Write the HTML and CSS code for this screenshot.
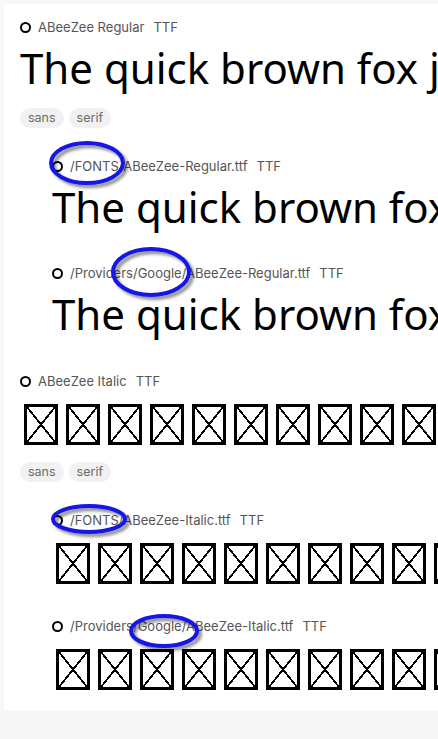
FILE: index.html
```html
<!DOCTYPE html>
<html>
<head>
<meta charset="utf-8">
<link rel="stylesheet" href="styles.css">
</head>
<body>
<div class="card">
  <div class="entry">
    <div class="head"><span class="dot"></span><span class="name">ABeeZee Regular</span><span class="fmt">TTF</span></div>
    <div class="sample">The quick brown fox jumps over the lazy dog</div>
    <div class="tags"><span class="tag">sans</span><span class="tag">serif</span></div>
    <div class="subs">
      <div class="sub">
        <div class="head"><span class="dot"></span><span class="name">/FONTS/ABeeZee-Regular.ttf</span><span class="fmt">TTF</span></div>
        <div class="sample">The quick brown fox jumps over the lazy dog</div>
      </div>
      <div class="sub">
        <div class="head"><span class="dot"></span><span class="name">/Providers/Google/ABeeZee-Regular.ttf</span><span class="fmt">TTF</span></div>
        <div class="sample">The quick brown fox jumps over the lazy dog</div>
      </div>
    </div>
  </div>
  <div class="entry">
    <div class="head"><span class="dot"></span><span class="name">ABeeZee Italic</span><span class="fmt">TTF</span></div>
    <div class="tofu-row"><i></i><i></i><i></i><i></i><i></i><i></i><i></i><i></i><i></i><i></i><i></i><i></i><i></i></div>
    <div class="tags after-tofu"><span class="tag">sans</span><span class="tag">serif</span></div>
    <div class="subs">
      <div class="sub">
        <div class="head"><span class="dot"></span><span class="name">/FONTS/ABeeZee-Italic.ttf</span><span class="fmt">TTF</span></div>
        <div class="tofu-row"><i></i><i></i><i></i><i></i><i></i><i></i><i></i><i></i><i></i><i></i><i></i><i></i></div>
      </div>
      <div class="sub">
        <div class="head"><span class="dot"></span><span class="name">/Providers/Google/ABeeZee-Italic.ttf</span><span class="fmt">TTF</span></div>
        <div class="tofu-row"><i></i><i></i><i></i><i></i><i></i><i></i><i></i><i></i><i></i><i></i><i></i><i></i></div>
      </div>
    </div>
  </div>
</div>
<svg class="marks" width="438" height="739" viewBox="0 0 438 739">
  <defs>
    <filter id="sh" x="-30%" y="-30%" width="160%" height="170%">
      <feGaussianBlur in="SourceAlpha" stdDeviation="1.6" result="b"/>
      <feOffset dx="3" dy="3" result="o"/>
      <feComponentTransfer in="o" result="g"><feFuncA type="linear" slope="0.45"/></feComponentTransfer>
      <feMerge><feMergeNode in="g"/><feMergeNode in="SourceGraphic"/></feMerge>
    </filter>
  </defs>
  <g fill="none" stroke="#1414e6" stroke-width="4" filter="url(#sh)">
    <ellipse cx="87" cy="163" rx="36" ry="20"/>
    <ellipse cx="151" cy="272" rx="38" ry="23"/>
    <ellipse cx="89" cy="519" rx="36" ry="13"/>
    <ellipse cx="164" cy="631" rx="33" ry="15"/>
  </g>
</svg>
</body>
</html>
```

FILE: styles.css
```css
html, body {
  margin: 0;
  padding: 0;
  overflow: hidden;
  background: #f7f7f7;
}
body {
  position: relative;
  width: 438px;
  height: 739px;
  padding: 4px 0 0 4px;
  box-sizing: border-box;
  font-family: Inter, "Liberation Sans", sans-serif;
}
.card {
  background: #fff;
  padding: 15px 0 20px 16px;
  overflow: hidden;
  width: 434px;
  box-sizing: border-box;
}
.entry + .entry {
  margin-top: 35px;
}
.head {
  display: flex;
  align-items: center;
  height: 16px;
  font-size: 13px;
  color: #555;
  white-space: nowrap;
}
.dot {
  width: 11px;
  height: 11px;
  border: 2px solid #000;
  border-radius: 50%;
  box-sizing: border-box;
  margin-right: 7px;
  flex: none;
}
.fmt {
  margin-left: 9px;
}
.sample {
  margin-top: 9px;
  font-family: "Noto Sans", sans-serif;
  font-size: 42px;
  line-height: 48px;
  color: #000;
  white-space: nowrap;
}
.tags {
  display: flex;
  gap: 5px;
  margin-top: 16px;
}
.tags.after-tofu {
  margin-top: 17px;
}
.tag {
  height: 20px;
  line-height: 20px;
  padding: 0 8px;
  border-radius: 10px;
  background: #f1f1f1;
  color: #6a6a6a;
  font-size: 12.5px;
}
.subs {
  margin-top: 30px;
  padding-left: 32px;
}
.sub + .sub {
  margin-top: 34px;
}
.tofu-row {
  display: flex;
  gap: 8px;
  margin-top: 15px;
  padding-left: 4px;
}
.tofu-row i {
  flex: none;
  width: 34px;
  height: 41px;
  border: 3px solid #000;
  box-sizing: border-box;
  background:
    linear-gradient(to top right, transparent calc(50% - 0.9px), #000 calc(50% - 0.9px), #000 calc(50% + 0.9px), transparent calc(50% + 0.9px)),
    linear-gradient(to bottom right, transparent calc(50% - 0.9px), #000 calc(50% - 0.9px), #000 calc(50% + 0.9px), transparent calc(50% + 0.9px));
}
.marks {
  position: absolute;
  left: 0;
  top: 0;
  pointer-events: none;
}
```
